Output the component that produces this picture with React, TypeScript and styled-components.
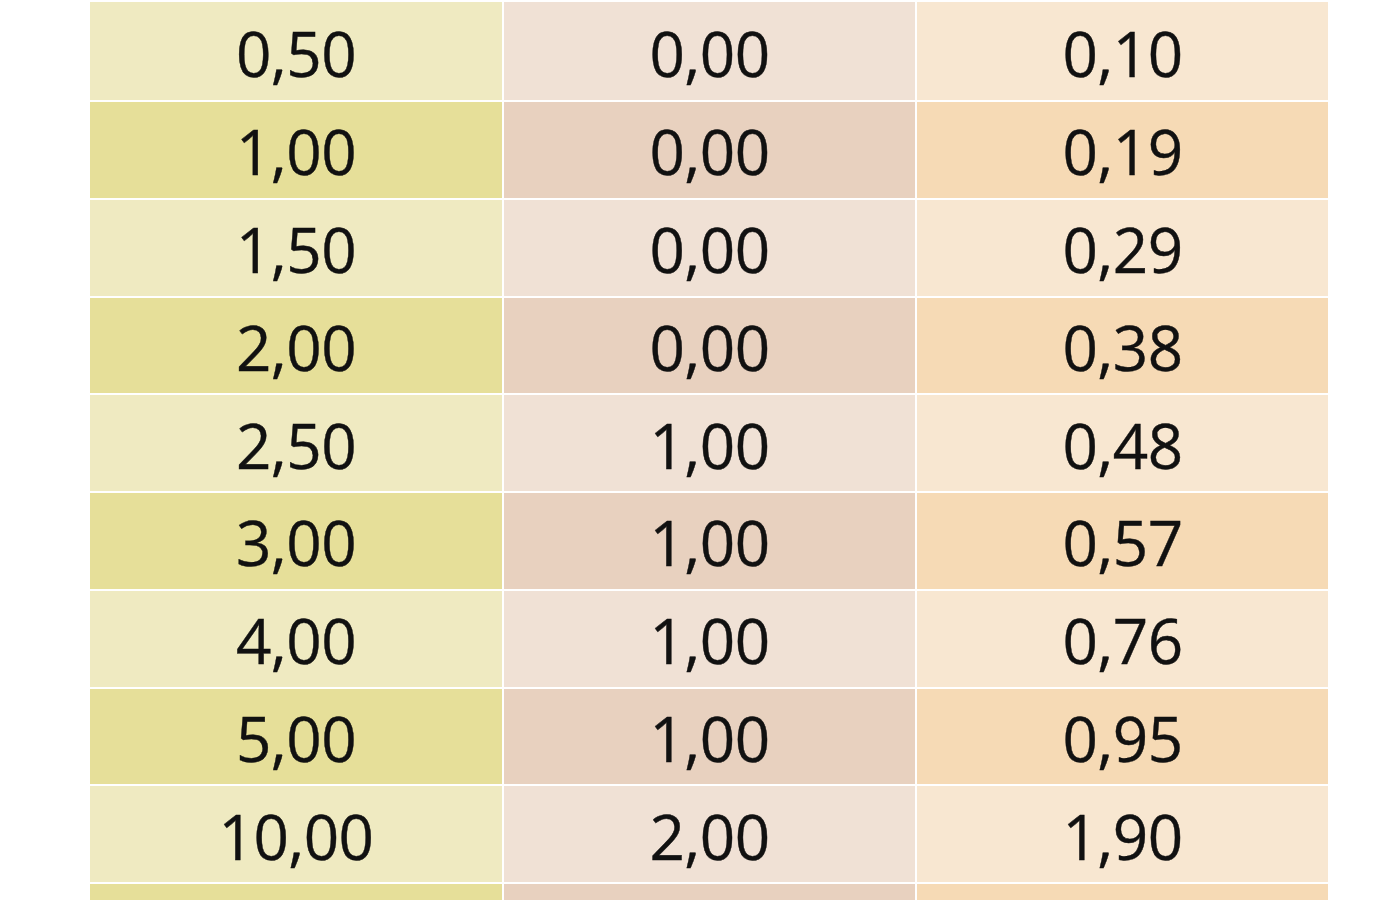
import React from "react";
import styled, { createGlobalStyle } from "styled-components";

const Global = createGlobalStyle`
  html, body { margin: 0; padding: 0; background: #ffffff; }
  body { font-family: "Open Sans", "Noto Sans", sans-serif; overflow: hidden; }
`;

const Page = styled.div`
  width: 1400px;
  height: 900px;
  overflow: hidden;
  background: #ffffff;
  padding: 2px 0 0 90px;
  box-sizing: border-box;
`;

const Table = styled.div`
  width: 1238px;
  display: grid;
  grid-template-columns: 412px 411px 411px;
  grid-template-rows: 98px repeat(8, 95.75px) 40px;
  column-gap: 2px;
  row-gap: 2px;
`;

type Tone = "light" | "dark";

const palette: Record<number, Record<Tone, string>> = {
  0: { light: "#efeac1", dark: "#e6df99" },
  1: { light: "#f0e1d5", dark: "#e8d1bf" },
  2: { light: "#f8e7d1", dark: "#f6dab5" },
};

const Cell = styled.div<{ $col: number; $tone: Tone }>`
  background: ${(p) => palette[p.$col][p.$tone]};
  display: flex;
  align-items: center;
  justify-content: center;
  padding-top: 3px;
  box-sizing: border-box;
  font-size: 62px;
  line-height: 1;
  color: #111111;
  letter-spacing: -0.6px;
  -webkit-text-stroke: 0.4px #111111;
`;

const rows: string[][] = [
  ["0,50", "0,00", "0,10"],
  ["1,00", "0,00", "0,19"],
  ["1,50", "0,00", "0,29"],
  ["2,00", "0,00", "0,38"],
  ["2,50", "1,00", "0,48"],
  ["3,00", "1,00", "0,57"],
  ["4,00", "1,00", "0,76"],
  ["5,00", "1,00", "0,95"],
  ["10,00", "2,00", "1,90"],
  ["", "", ""],
];

export default function App() {
  return (
    <>
      <Global />
      <Page>
        <Table>
          {rows.map((r, i) =>
            r.map((v, j) => (
              <Cell key={`${i}-${j}`} $col={j} $tone={i % 2 === 0 ? "light" : "dark"}>
                {v}
              </Cell>
            ))
          )}
        </Table>
      </Page>
    </>
  );
}
